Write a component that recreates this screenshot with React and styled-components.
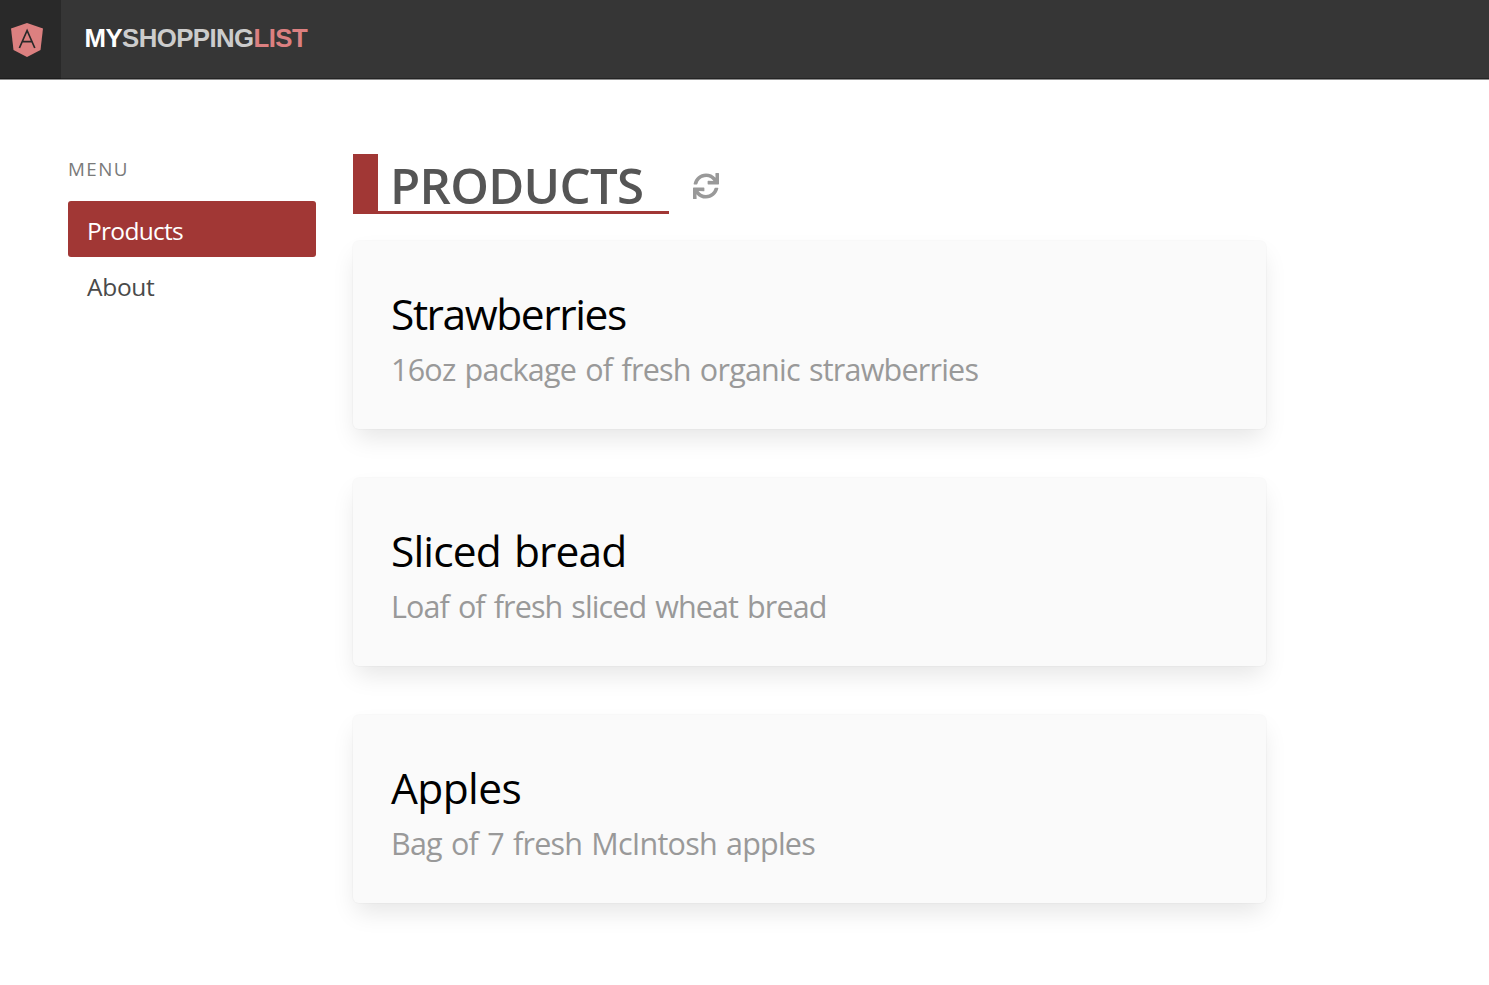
import React from "react";
import styled, { createGlobalStyle } from "styled-components";
import { FaSync } from "react-icons/fa";

const GlobalStyle = createGlobalStyle`
  *, *::before, *::after { box-sizing: border-box; }
  body {
    margin: 0;
    background: #fff;
    color: #4a4a4a;
    font-family: "Open Sans", "Noto Sans", sans-serif;
  }
  h1, h2, p, ul { margin: 0; padding: 0; font-weight: 400; }
`;

const Page = styled.div`
  min-height: 985px;
  overflow: hidden;
`;

const Navbar = styled.header`
  display: flex;
  height: 80px;
  background: #363636;
  border-bottom: 1px solid #8e8e8e;
  box-shadow: inset 0 -1px 0 #242424;
`;

const LogoLink = styled.a`
  display: flex;
  width: 61px;
  padding: 23px 0 0 11px;
  background: #292929;
  box-shadow: inset 0 -1px 0 #1c1c1c;
`;

const Brand = styled.div`
  display: flex;
  padding: 23px 0 0 23.5px;
  font: 700 25.8px/30px "Liberation Sans", Arial, sans-serif;
  letter-spacing: -0.58px;
`;

const BrandPart = styled.span`
  color: ${({ $color }) => $color};
`;

const Columns = styled.div`
  display: flex;
  padding: 74px 0 0 68px;
`;

const Menu = styled.nav`
  width: 247.5px;
  margin-right: 37.5px;
`;

const MenuLabel = styled.p`
  margin: 3px 0 19px;
  color: #7a7a7a;
  font-size: 18.8px;
  line-height: 25px;
  letter-spacing: 1.4px;
`;

const MenuList = styled.ul`
  list-style: none;
`;

const MenuItem = styled.li`
  height: 56px;
  padding: 12px 19px 0;
  border-radius: 3px;
  background: ${({ $active }) => ($active ? "#a13735" : "transparent")};
  color: ${({ $active }) => ($active ? "#fff" : "#4a4a4a")};
  font-size: 24.5px;
  line-height: 36px;
  letter-spacing: ${({ $spacing }) => $spacing}px;
`;

const Content = styled.main`
  width: 913px;
`;

const TitleRow = styled.div`
  display: flex;
  align-items: flex-start;
  margin-bottom: 27px;
`;

const Title = styled.h1`
  width: 316px;
  height: 59.5px;
  padding-left: 12px;
  border-left: 25px solid #a13735;
  box-shadow: inset 0 -3px 0 #a13735;
  color: #555;
  font-size: 49.2px;
  font-weight: 600;
  line-height: 62px;
  white-space: nowrap;
  letter-spacing: -0.7px;
`;

const RefreshButton = styled.button`
  display: flex;
  margin: 18.5px 0 0 24px;
  padding: 0;
  border: 0;
  background: none;
  color: #999;
`;

const CardList = styled.div`
  display: flex;
  flex-direction: column;
  gap: 49px;
`;

const Card = styled.article`
  height: 188px;
  padding: 43px 38px 0;
  border-radius: 6px;
  background: #fafafa;
  box-shadow: 0 12px 25px -3px rgba(10, 10, 10, 0.1), 0 0 0 1px rgba(10, 10, 10, 0.02);
`;

const CardTitle = styled.h2`
  color: #000;
  font-size: 42.5px;
  line-height: 60px;
  white-space: nowrap;
  word-spacing: 3px;
  letter-spacing: ${({ $spacing }) => $spacing}px;
`;

const CardText = styled.p`
  color: #999;
  font-size: 30.5px;
  line-height: 51px;
  white-space: nowrap;
  word-spacing: 2px;
  letter-spacing: ${({ $spacing }) => $spacing}px;
`;

const products = [
  { name: "Strawberries", text: "16oz package of fresh organic strawberries", nameSpacing: -1.42, textSpacing: -0.77 },
  { name: "Sliced bread", text: "Loaf of fresh sliced wheat bread", nameSpacing: -0.87, textSpacing: -0.9 },
  { name: "Apples", text: "Bag of 7 fresh McIntosh apples", nameSpacing: -0.6, textSpacing: -0.78 },
];

const ShieldLogo = () => (
  <svg width="32" height="34" viewBox="0 0 32 34">
    <path d="M16 0 32 5.5 29.5 27 16 34 2.5 27 0 5.5Z" fill="#dc8080" />
    <path d="M8.4 25 16.1 7.5 23.8 25M11.4 18.6H20.8" fill="none" stroke="#292929" strokeWidth="1.7" />
  </svg>
);

export default function App() {
  return (
    <Page>
      <GlobalStyle />
      <Navbar>
        <LogoLink><ShieldLogo /></LogoLink>
        <Brand>
          <BrandPart $color="#fff">MY</BrandPart>
          <BrandPart $color="#ccc">SHOPPING</BrandPart>
          <BrandPart $color="#dc8080">LIST</BrandPart>
        </Brand>
      </Navbar>
      <Columns>
        <Menu>
          <MenuLabel>MENU</MenuLabel>
          <MenuList>
            <MenuItem $active $spacing={-0.7}>Products</MenuItem>
            <MenuItem $spacing={-0.3}>About</MenuItem>
          </MenuList>
        </Menu>
        <Content>
          <TitleRow>
            <Title>PRODUCTS</Title>
            <RefreshButton aria-label="Refresh"><FaSync size={26} /></RefreshButton>
          </TitleRow>
          <CardList>
            {products.map((p) => (
              <Card key={p.name}>
                <CardTitle $spacing={p.nameSpacing}>{p.name}</CardTitle>
                <CardText $spacing={p.textSpacing}>{p.text}</CardText>
              </Card>
            ))}
          </CardList>
        </Content>
      </Columns>
    </Page>
  );
}
